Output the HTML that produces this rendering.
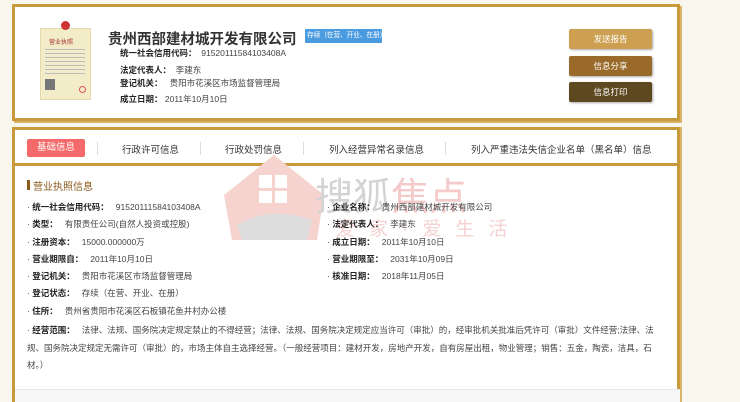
<!DOCTYPE html>
<html style="width:740px;height:402px;overflow:hidden"><head><meta charset="utf-8"><style>
*{margin:0;padding:0;box-sizing:border-box}
body{width:740px;height:402px;background:#f9f6ed;font-family:"Liberation Sans","Noto Sans CJK SC",sans-serif;position:relative;overflow:hidden;color:#333}
.a{position:absolute;white-space:nowrap}
.card1{position:absolute;left:12px;top:4px;width:668px;height:117px;background:#fff;border:3px solid #c99a3c;box-shadow:2px 2px 0 #d8b46a}
.card2{position:absolute;left:12px;top:127px;width:668px;height:275px;background:#fff;border:3px solid #c99a3c;border-bottom:none;box-shadow:2px 0 0 #d8b46a}
.f{font-size:8.5px;color:#444}
.b{font-weight:bold;color:#222}
.btn{position:absolute;left:569px;width:83px;height:20px;color:#fff;font-size:8.5px;text-align:center;line-height:20px;border-radius:2px;box-shadow:1px 1px 2px #aaa}
.sep{position:absolute;top:142px;width:1px;height:13px;background:#ddd}
.tab{position:absolute;top:142px;font-size:9.5px;color:#333}
</style></head><body>
<div class="card1"></div>
<div class="card2"></div>
<div class="a" style="left:40px;top:28px;width:51px;height:72px;background:#f3ecc8;border:1px solid #e4d9a8"></div>
<div class="a" style="left:61px;top:21px;width:9px;height:9px;border-radius:50%;background:#c33"></div>
<div class="a" style="left:49px;top:37px;font-size:6px;color:#a33">营业执照</div>
<div class="a" style="left:45px;top:47px;width:40px;height:28px;background:repeating-linear-gradient(#f3ecc8 0 2px,#bbb 2px 3px,#f3ecc8 3px 4px)"></div>
<div class="a" style="left:45px;top:79px;width:10px;height:11px;background:#777"></div>
<div class="a" style="left:79px;top:86px;width:7px;height:7px;border-radius:50%;border:1px solid #d55"></div>
<div class="a" style="left:108px;top:28px;font-size:14.5px;font-weight:bold;color:#333">贵州西部建材城开发有限公司</div>
<div class="a" style="left:305px;top:29px;width:77px;height:14px;background:#4a9be0;color:#fff;font-size:6.8px;letter-spacing:-0.2px;line-height:14px;padding-left:2px;border-radius:1px;overflow:hidden">存续（在营、开业、在册）</div>
<div class="a f" style="left:120px;top:47px"><span class="b">统一社会信用代码：</span>&nbsp; 91520111584103408A</div>
<div class="a f" style="left:120px;top:64px"><span class="b">法定代表人：</span>&nbsp; 李建东</div>
<div class="a f" style="left:120px;top:77px"><span class="b">登记机关：</span>&nbsp;&nbsp; 贵阳市花溪区市场监督管理局</div>
<div class="a f" style="left:120px;top:93px"><span class="b">成立日期：</span> 2011年10月10日</div>
<div class="btn" style="top:29px;background:#cd9f51">发送报告</div>
<div class="btn" style="top:56px;background:#9a6a2a">信息分享</div>
<div class="btn" style="top:82px;background:#5e4820">信息打印</div>
<div class="a" style="left:27px;top:139px;width:58px;height:18px;background:#f46a6a;color:#fff;font-size:9.5px;text-align:center;line-height:18px;border-radius:2px">基础信息</div>
<div class="sep" style="left:97px"></div><div class="sep" style="left:200px"></div><div class="sep" style="left:303px"></div><div class="sep" style="left:445px"></div>
<div class="tab" style="left:122px">行政许可信息</div>
<div class="tab" style="left:225px">行政处罚信息</div>
<div class="tab" style="left:329px">列入经营异常名录信息</div>
<div class="tab" style="left:471px">列入严重违法失信企业名单（黑名单）信息</div>
<div class="a" style="left:15px;top:163px;width:665px;height:3px;background:#c99a3c"></div>
<div class="a" style="left:15px;top:389px;width:665px;height:13px;background:#f6f6f6;border-top:1px solid #e6e6e6"></div>
<svg class="a" style="left:222px;top:150px" width="300" height="100">
<path d="M2 45 L52 5 L102 45 L95 90 L10 90 Z" fill="#f6d3cf"/>
<rect x="37" y="25" width="28" height="28" fill="#fff"/><rect x="50" y="25" width="3" height="28" fill="#f6d3cf"/><rect x="37" y="38" width="28" height="3" fill="#f6d3cf"/>
<path d="M15 75 Q50 55 90 70 L85 90 L20 90Z" fill="#dcdcdc"/>
</svg>
<div class="a" style="left:315px;top:166px;font-size:38px;color:#d3d3d3">搜狐<span style="color:#f4caca">焦点</span></div>
<div class="a" style="left:336px;top:214px;font-size:19px;color:#f6d2d2;letter-spacing:14px">爱家·爱生活</div>
<div class="a" style="left:27px;top:180px;width:3px;height:10px;background:#8a5a1c"></div>
<div class="a" style="left:33px;top:178px;font-size:10px;color:#8a5a1c">营业执照信息</div>
<div class="a f" style="left:27px;top:201px">· <span class="b">统一社会信用代码：</span>&nbsp;&nbsp; 91520111584103408A</div>
<div class="a f" style="left:27px;top:218px">· <span class="b">类型：</span>&nbsp;&nbsp; 有限责任公司(自然人投资或控股)</div>
<div class="a f" style="left:27px;top:236px">· <span class="b">注册资本：</span>&nbsp;&nbsp; 15000.000000万</div>
<div class="a f" style="left:27px;top:253px">· <span class="b">营业期限自：</span>&nbsp;&nbsp; 2011年10月10日</div>
<div class="a f" style="left:27px;top:270px">· <span class="b">登记机关：</span>&nbsp;&nbsp; 贵阳市花溪区市场监督管理局</div>
<div class="a f" style="left:27px;top:287px">· <span class="b">登记状态：</span>&nbsp;&nbsp; 存续（在营、开业、在册）</div>
<div class="a f" style="left:27px;top:305px">· <span class="b">住所：</span>&nbsp;&nbsp; 贵州省贵阳市花溪区石板镇花鱼井村办公楼</div>
<div class="a f" style="left:327px;top:201px">· <span class="b">企业名称：</span>&nbsp;&nbsp; 贵州西部建材城开发有限公司</div>
<div class="a f" style="left:327px;top:218px">· <span class="b">法定代表人：</span>&nbsp;&nbsp; 李建东</div>
<div class="a f" style="left:327px;top:236px">· <span class="b">成立日期：</span>&nbsp;&nbsp; 2011年10月10日</div>
<div class="a f" style="left:327px;top:253px">· <span class="b">营业期限至：</span>&nbsp;&nbsp; 2031年10月09日</div>
<div class="a f" style="left:327px;top:270px">· <span class="b">核准日期：</span>&nbsp;&nbsp; 2018年11月05日</div>
<div class="a f" style="left:27px;top:322px;width:640px;white-space:normal;line-height:17.5px">· <span class="b">经营范围：</span>&nbsp;&nbsp; 法律、法规、国务院决定规定禁止的不得经营；法律、法规、国务院决定规定应当许可（审批）的，经审批机关批准后凭许可（审批）文件经营;法律、法规、国务院决定规定无需许可（审批）的，市场主体自主选择经营。（一般经营项目：建材开发，房地产开发，自有房屋出租，物业管理；销售：五金，陶瓷，洁具，石材。）</div>
</body></html>
